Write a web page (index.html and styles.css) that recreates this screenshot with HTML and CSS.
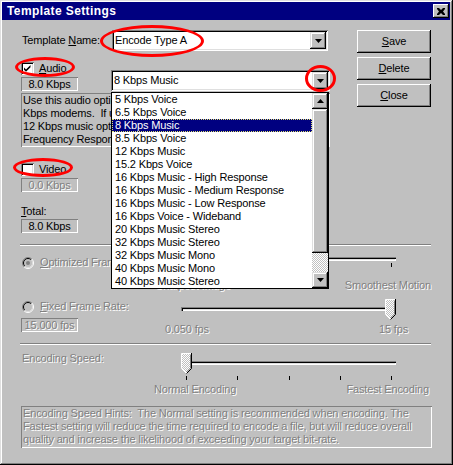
FILE: index.html
```html
<!DOCTYPE html>
<html>
<head>
<meta charset="utf-8">
<title>Template Settings</title>
<link rel="stylesheet" href="styles.css">
</head>
<body>
<div class="window">
  <div class="titlebar">
    <span class="title">Template Settings</span>
    <span class="close-btn"><svg width="8" height="7" viewBox="0 0 8 7"><path d="M0 0h2l2 2 2-2h2v1l-2 2.5 2 2.5v1h-2l-2-2-2 2h-2v-1l2-2.5-2-2.5z" fill="#000"/></svg></span>
  </div>
  <div class="content">
    <div class="top">
      <div class="form">
        <div class="name-row">
          <span class="name-label">Template <u>N</u>ame:</span>
          <div class="combo combo-name">
            <span class="combo-text">Encode Type A</span>
            <span class="combo-btn"><svg width="7" height="4" viewBox="0 0 7 4"><path d="M0 0h7l-3.5 4z" fill="#000"/></svg></span>
          </div>
        </div>

        <div class="audio-head">
          <div class="check-col">
            <div class="check"><span class="box"><svg width="9" height="9" viewBox="0 0 9 9"><path d="M1 3.5l2 2 4.5-4.5v2.2l-4.5 4.5-2-2z" fill="#000"/></svg></span><span><u>A</u>udio</span></div>
            <div class="field">8.0 Kbps</div>
          </div>
          <div class="combo combo-audio">
            <span class="combo-text">8 Kbps Music</span>
            <span class="combo-btn"><svg width="7" height="4" viewBox="0 0 7 4"><path d="M0 0h7l-3.5 4z" fill="#000"/></svg></span>
            <div class="dropdown">
              <div class="items">
                <div class="item">5 Kbps Voice</div>
                <div class="item">6.5 Kbps Voice</div>
                <div class="item sel">8 Kbps Music</div>
                <div class="item">8.5 Kbps Voice</div>
                <div class="item">12 Kbps Music</div>
                <div class="item">15.2 Kbps Voice</div>
                <div class="item">16 Kbps Music - High Response</div>
                <div class="item">16 Kbps Music - Medium Response</div>
                <div class="item">16 Kbps Music - Low Response</div>
                <div class="item">16 Kbps Voice - Wideband</div>
                <div class="item">20 Kbps Music Stereo</div>
                <div class="item">32 Kbps Music Stereo</div>
                <div class="item">32 Kbps Music Mono</div>
                <div class="item">40 Kbps Music Mono</div>
                <div class="item">40 Kbps Music Stereo</div>
              </div>
              <div class="scrollbar">
                <div class="sb-btn"><svg width="7" height="4" viewBox="0 0 7 4"><path d="M0 4h7l-3.5-4z" fill="#000"/></svg></div>
                <div class="sb-thumb"></div>
                <div class="sb-track"></div>
                <div class="sb-btn"><svg width="7" height="4" viewBox="0 0 7 4"><path d="M0 0h7l-3.5 4z" fill="#000"/></svg></div>
              </div>
            </div>
          </div>
        </div>

        <div class="desc">Use this audio option for music content targeted at 28.8<br>Kbps modems.&nbsp; If using 56 Kbps modems, consider the<br>12 Kbps music option.&nbsp; 8 kHz sampling rate, Low<br>Frequency Response.</div>

        <div class="video">
          <div class="check"><span class="box"></span><span><u>V</u>ideo</span></div>
          <div class="field dis">0.0 Kbps</div>
        </div>

        <div class="total">
          <div class="total-label"><u>T</u>otal:</div>
          <div class="field">8.0 Kbps</div>
        </div>
      </div>

      <div class="buttons">
        <div class="btn"><span><u>S</u>ave</span></div>
        <div class="btn"><span><u>D</u>elete</span></div>
        <div class="btn"><span><u>C</u>lose</span></div>
      </div>
    </div>

    <div class="sep"></div>

    <div class="fr-row fr-row-a">
      <div class="fr-left">
        <div class="radio dis"><svg class="radio-ico" width="12" height="12" viewBox="0 0 12 12"><circle cx="6" cy="6" r="5" fill="#c0c0c0"/><path d="M9.9 2.1A5.5 5.5 0 0 0 2.1 9.9" stroke="#808080" fill="none"/><path d="M2.1 9.9A5.5 5.5 0 0 0 9.9 2.1" stroke="#fff" fill="none"/><path d="M9.2 2.8A4.5 4.5 0 0 0 2.8 9.2" stroke="#000" fill="none"/><path d="M2.8 9.2A4.5 4.5 0 0 0 9.2 2.8" stroke="#dfdfdf" fill="none"/><circle cx="6" cy="6" r="2" fill="#808080"/></svg><span><u>O</u>ptimized Frame Rate</span></div>
      </div>
      <div class="slider slider-1">
        <div class="track-row"><div class="track"></div></div>
        <div class="ticks ticks-2"><i></i><i></i></div>
        <div class="slider-labels dis"><span>Sharpest Image</span><span>Smoothest Motion</span></div>
      </div>
    </div>

    <div class="fr-row fr-row-b">
      <div class="fr-left">
        <div class="radio dis"><svg class="radio-ico" width="12" height="12" viewBox="0 0 12 12"><circle cx="6" cy="6" r="5" fill="#c0c0c0"/><path d="M9.9 2.1A5.5 5.5 0 0 0 2.1 9.9" stroke="#808080" fill="none"/><path d="M2.1 9.9A5.5 5.5 0 0 0 9.9 2.1" stroke="#fff" fill="none"/><path d="M9.2 2.8A4.5 4.5 0 0 0 2.8 9.2" stroke="#000" fill="none"/><path d="M2.8 9.2A4.5 4.5 0 0 0 9.2 2.8" stroke="#dfdfdf" fill="none"/></svg><span><u>F</u>ixed Frame Rate:</span></div>
        <div class="field field-fps dis">15.000 fps</div>
      </div>
      <div class="slider slider-2">
        <div class="track-row thumb-row">
          <div class="track"></div>
          <svg class="thumb thumb-end" width="11" height="21" viewBox="0 0 11 21"><defs><pattern id="chk2" width="2" height="2" patternUnits="userSpaceOnUse"><rect width="2" height="2" fill="#c0c0c0"/><rect width="1" height="1" fill="#fff"/><rect x="1" y="1" width="1" height="1" fill="#fff"/></pattern></defs><path d="M0.5 0.5H10.5V15.5L5.5 20.5L0.5 15.5Z" fill="url(#chk2)"/><path d="M0.5 15.5V0.5H10" stroke="#fff" fill="none"/><path d="M0.5 15.5L5.5 20.5" stroke="#fff" fill="none"/><path d="M10.5 0V15.5L5.5 20.5" stroke="#000" fill="none"/><path d="M9.5 1.5V15L5.5 19" stroke="#808080" fill="none"/></svg>
        </div>
        <div class="slider-labels dis"><span>0.050 fps</span><span>15 fps</span></div>
      </div>
    </div>

    <div class="sep sep-2"></div>

    <div class="fr-row fr-row-c">
      <div class="fr-left">
        <div class="enc-label dis">Encoding Speed:</div>
      </div>
      <div class="slider slider-3">
        <div class="track-row thumb-row">
          <div class="track"></div>
          <svg class="thumb thumb-start" width="11" height="21" viewBox="0 0 11 21"><defs><pattern id="chk3" width="2" height="2" patternUnits="userSpaceOnUse"><rect width="2" height="2" fill="#c0c0c0"/><rect width="1" height="1" fill="#fff"/><rect x="1" y="1" width="1" height="1" fill="#fff"/></pattern></defs><path d="M0.5 0.5H10.5V15.5L5.5 20.5L0.5 15.5Z" fill="url(#chk3)"/><path d="M0.5 15.5V0.5H10" stroke="#fff" fill="none"/><path d="M0.5 15.5L5.5 20.5" stroke="#fff" fill="none"/><path d="M10.5 0V15.5L5.5 20.5" stroke="#000" fill="none"/><path d="M9.5 1.5V15L5.5 19" stroke="#808080" fill="none"/></svg>
        </div>
        <div class="ticks"><i></i><i></i><i></i><i></i><i></i></div>
        <div class="slider-labels dis"><span>Normal Encoding</span><span>Fastest Encoding</span></div>
      </div>
    </div>

    <div class="hint dis">Encoding Speed Hints:&nbsp; The Normal setting is recommended when encoding. The<br>Fastest setting will reduce the time required to encode a file, but will reduce overall<br>quality and increase the likelihood of exceeding your target bit-rate.</div>
  </div>

  <div class="mark mark-name"></div>
  <div class="mark mark-audio"></div>
  <div class="mark mark-arrow"></div>
  <div class="mark mark-video"></div>
</div>
</body>
</html>
```
FILE: styles.css
```css
* { box-sizing: border-box; }
html, body { margin: 0; padding: 0; }
body {
  width: 453px;
  height: 465px;
  overflow: hidden;
  background: #c0c0c0;
  color: #000;
  font: 11px/13px "Liberation Sans", Arial, sans-serif;
}
u { text-decoration: underline; text-underline-offset: 1px; }

.window {
  position: relative;
  width: 453px;
  height: 465px;
  background: #c0c0c0;
  padding: 2px 3px 3px 2px;
  box-shadow: inset -1px -1px #000, inset 1px 1px #dfdfdf, inset -2px -2px #808080, inset 2px 2px #fff;
}

.titlebar {
  height: 18px;
  background: #000080;
  display: flex;
  align-items: center;
  justify-content: space-between;
  padding: 0 1px 0 5px;
}
.title {
  color: #fff;
  font-weight: bold;
  font-size: 12px;
  letter-spacing: 0.4px;
}
.close-btn {
  width: 16px;
  height: 14px;
  background: #c0c0c0;
  box-shadow: inset -1px -1px #000, inset 1px 1px #fff, inset -2px -2px #808080;
  display: flex;
  align-items: center;
  justify-content: center;
}
.close-btn svg { display: block; }

.content { padding: 10px 19px 0 19px; letter-spacing: -0.15px; }

.top { display: flex; justify-content: space-between; }
.form { width: 309px; }

.name-row { display: flex; align-items: center; height: 21px; }
.name-label { width: 91px; padding-left: 1px; }

.combo {
  position: relative;
  height: 21px;
  background: #fff;
  padding: 2px;
  display: flex;
  align-items: center;
  justify-content: space-between;
  box-shadow: inset 1px 1px #808080, inset -1px -1px #fff, inset 2px 2px #000, inset -2px -2px #dfdfdf;
}
.combo-name { width: 216px; }
.combo-audio { width: 219px; }
.combo-text { padding-left: 1px; }
.combo-btn {
  width: 16px;
  height: 17px;
  background: #c0c0c0;
  box-shadow: inset -1px -1px #000, inset 1px 1px #dfdfdf, inset -2px -2px #808080, inset 2px 2px #fff;
  display: flex;
  align-items: center;
  justify-content: center;
}
.combo-btn svg { display: block; }

.audio-head { display: flex; align-items: flex-end; margin-top: 11px; }
.check-col { width: 90px; }
.check { display: flex; align-items: center; gap: 5px; height: 13px; }
.box {
  width: 13px;
  height: 13px;
  background: #fff;
  box-shadow: inset 1px 1px #808080, inset -1px -1px #fff, inset 2px 2px #000, inset -2px -2px #dfdfdf;
  display: flex;
  align-items: center;
  justify-content: center;
}
.box svg { display: block; }

.field {
  width: 57px;
  height: 14px;
  margin-top: 2px;
  text-align: center;
  line-height: 14px;
  box-shadow: inset 1px 1px #808080, inset -1px -1px #fff;
}

.dis { color: #808080; text-shadow: 1px 1px 0 #fff; }

.dropdown {
  position: absolute;
  top: 22px;
  left: 0;
  width: 218px;
  border: 1px solid #000;
  background: #fff;
  display: flex;
  z-index: 10;
}
.items { flex: 1; }
.item { height: 13px; line-height: 13px; padding-left: 3px; white-space: nowrap; }
.item.sel {
  background: #000080;
  color: #fff;
  outline: 1px dotted #e0e070;
  outline-offset: -1px;
}
.scrollbar { width: 16px; display: flex; flex-direction: column; }
.sb-btn, .sb-thumb {
  background: #c0c0c0;
  box-shadow: inset -1px -1px #000, inset 1px 1px #dfdfdf, inset -2px -2px #808080, inset 2px 2px #fff;
}
.sb-btn { height: 16px; display: flex; align-items: center; justify-content: center; }
.sb-btn svg { display: block; }
.sb-thumb { height: 144px; }
.sb-track {
  flex: 1;
  background: repeating-conic-gradient(#c0c0c0 0 25%, #fff 0 50%) 0 0 / 2px 2px;
}

.desc {
  margin-top: 2px;
  height: 54px;
  padding: 1px 2px;
  white-space: nowrap;
  overflow: hidden;
  box-shadow: inset 1px 1px #808080, inset -1px -1px #fff;
}

.video { margin-top: 16px; }
.total { margin-top: 13px; }
.total .field { margin-top: 1px; }

.buttons { width: 74px; display: flex; flex-direction: column; gap: 4px; }
.btn {
  height: 23px;
  background: #c0c0c0;
  box-shadow: inset -1px -1px #000, inset 1px 1px #fff, inset -2px -2px #808080;
  display: flex;
  align-items: center;
  justify-content: center;
}

.sep {
  margin: 11px 0 0 -1px;
  height: 2px;
  border-top: 1px solid #808080;
  border-bottom: 1px solid #fff;
}
.sep-2 { margin-top: 7px; }

.fr-row { display: flex; }
.fr-left { width: 129px; }
.slider { width: 281px; display: flex; flex-direction: column; }

.radio { display: flex; align-items: center; gap: 6px; height: 13px; white-space: nowrap; padding-left: 1px; }
.radio-ico { display: block; flex: none; }

.fr-row-a .fr-left { padding-top: 10px; }
.fr-row-b .fr-left { padding-top: 8px; }
.field-fps { margin-top: 5px; }
.fr-row-c .fr-left { padding-top: 7px; padding-left: 1px; }

.track-row { position: relative; }
.track {
  margin-left: 31px;
  width: 215px;
  height: 4px;
  background: #c0c0c0;
  box-shadow: inset 1px 1px #808080, inset 2px 2px #000, inset -1px -1px #fff, inset -2px -2px #dfdfdf;
}
.thumb-row { height: 21px; }
.thumb-row .track { position: relative; top: 8px; }
.thumb { position: absolute; top: 0; display: block; }
.thumb-start { left: 31px; }
.thumb-end { left: 235px; }

.ticks {
  margin-left: 36px;
  width: 206px;
  height: 4px;
  margin-top: 2px;
  display: flex;
  justify-content: space-between;
}
.ticks i { width: 1px; height: 4px; background: #000; }

.slider-labels { display: flex; justify-content: space-between; white-space: nowrap; }

.slider-1 .track-row { margin-top: 11px; }
.slider-1 .slider-labels { margin-top: 12px; padding: 0 0 0 5px; }
.slider-2 .thumb-row { margin-top: 7px; }
.slider-2 .slider-labels { margin-top: 3px; padding: 0 23px 0 15px; }
.slider-3 .thumb-row { margin-top: 8px; }
.slider-3 .slider-labels { margin-top: 3px; padding: 0 2px 0 4px; }

.hint {
  margin-top: 10px;
  width: 411px;
  height: 42px;
  padding: 1px 2px;
  white-space: nowrap;
  overflow: hidden;
  box-shadow: inset 1px 1px #808080, inset -1px -1px #fff;
}

.mark {
  position: absolute;
  border: 3px solid #f00;
  border-radius: 50%;
  z-index: 20;
  pointer-events: none;
}
.mark-name { left: 100px; top: 25px; width: 104px; height: 32px; }
.mark-audio { left: 15px; top: 57px; width: 60px; height: 20px; }
.mark-arrow { left: 305px; top: 65px; width: 31px; height: 27px; }
.mark-video { left: 13px; top: 158px; width: 60px; height: 19px; }
```
